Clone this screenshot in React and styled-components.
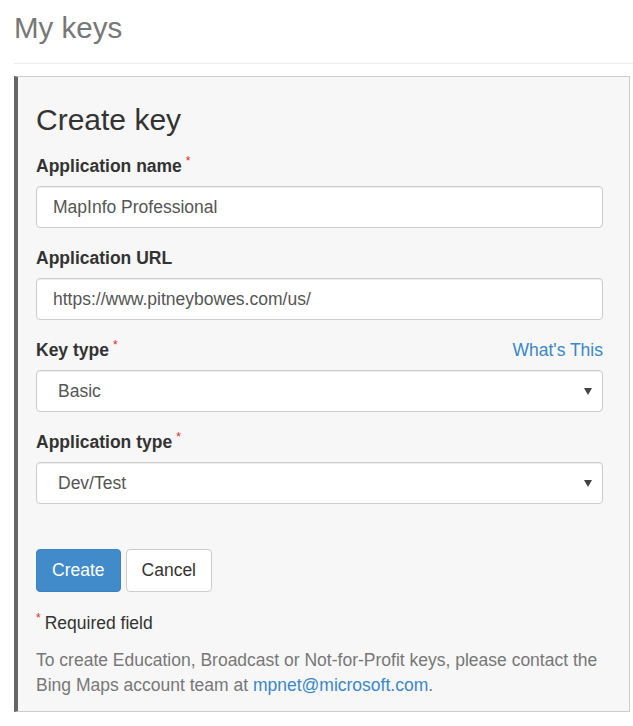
import React from 'react'
import styled, { createGlobalStyle } from 'styled-components'

const Global = createGlobalStyle`
  body {
    margin: 0;
    background: #fff;
    font-family: "Liberation Sans", Arial, sans-serif;
    font-size: 17.5px;
    color: #333;
  }
  * { box-sizing: border-box; }
`

const Page = styled.div`
  padding: 0 0 0 14px;
`

const PageTitle = styled.h1`
  margin: 0;
  padding-top: 9px;
  font-size: 29.5px;
  font-weight: 400;
  line-height: 38px;
  color: #777;
  padding-bottom: 16px;
  border-bottom: 1px solid #eee;
`

const Panel = styled.div`
  margin-top: 12px;
  width: 616px;
  background: #f7f7f7;
  border: 1px solid #ccc;
  border-left: 4px solid #666;
  padding: 23px 26px 13px 18px;
`

const Heading = styled.h2`
  margin: 0 0 15px;
  font-size: 30px;
  font-weight: 400;
  line-height: 40px;
  color: #333;
`

const Field = styled.div`
  margin-bottom: ${p => p.$gap ?? 19}px;
`

const LabelRow = styled.div`
  display: flex;
  justify-content: space-between;
  align-items: baseline;
  height: 22px;
  margin-bottom: 9px;
`

const Label = styled.label`
  font-weight: 700;
  font-size: 17.5px;
  line-height: 22px;
  color: #333;
`

const Star = styled.sup`
  color: #e0252b;
  font-weight: 400;
  font-size: 12px;
  margin-left: 4px;
  vertical-align: 7px;
  line-height: 0;
`

const Link = styled.a`
  color: #3a87c8;
  text-decoration: none;
  font-size: 17.5px;
  line-height: 22px;
`

const Input = styled.div`
  height: 42px;
  background: #fff;
  border: 1px solid #ccc;
  border-radius: 4px;
  box-shadow: inset 0 1px 1px rgba(0, 0, 0, 0.075);
  padding: 0 16px;
  display: flex;
  align-items: center;
  justify-content: space-between;
  font-size: 17.5px;
  color: #555;
`

const SelectBox = styled(Input)`
  padding: 0 10px 0 21px;
`

const Caret = styled.span`
  width: 0;
  height: 0;
  border-left: 4px solid transparent;
  border-right: 4px solid transparent;
  border-top: 7px solid #444;
`

const Buttons = styled.div`
  display: flex;
  gap: 5px;
  margin-top: 45px;
`

const Button = styled.button`
  height: 43px;
  padding: 0 15px;
  font-family: inherit;
  font-size: 17.5px;
  border-radius: 4px;
  border: 1px solid ${p => (p.$primary ? '#3a84c4' : '#ccc')};
  background: ${p => (p.$primary ? '#428bca' : '#fff')};
  color: ${p => (p.$primary ? '#fff' : '#333')};
`

const Required = styled.p`
  margin: 20px 0 0;
  font-size: 17.5px;
  line-height: 22px;
  color: #333;
`

const Note = styled.p`
  margin: 14px 0 0;
  font-size: 17.5px;
  line-height: 25px;
  color: #777;
`

export default function App() {
  return (
    <Page>
      <Global />
      <PageTitle>My keys</PageTitle>
      <Panel>
        <Heading>Create key</Heading>
        <Field>
          <LabelRow>
            <Label>Application name<Star>*</Star></Label>
          </LabelRow>
          <Input>MapInfo Professional</Input>
        </Field>
        <Field>
          <LabelRow>
            <Label>Application URL</Label>
          </LabelRow>
          <Input>https://www.pitneybowes.com/us/</Input>
        </Field>
        <Field>
          <LabelRow>
            <Label>Key type<Star>*</Star></Label>
            <Link href="#">What's This</Link>
          </LabelRow>
          <SelectBox>Basic<Caret /></SelectBox>
        </Field>
        <Field $gap={0}>
          <LabelRow>
            <Label>Application type<Star>*</Star></Label>
          </LabelRow>
          <SelectBox>Dev/Test<Caret /></SelectBox>
        </Field>
        <Buttons>
          <Button $primary>Create</Button>
          <Button>Cancel</Button>
        </Buttons>
        <Required><Star style={{ marginLeft: 0, marginRight: 4 }}>*</Star>Required field</Required>
        <Note>
          To create Education, Broadcast or Not-for-Profit keys, please contact the Bing Maps account team at <Link href="#">mpnet@microsoft.com</Link>.
        </Note>
      </Panel>
    </Page>
  )
}
